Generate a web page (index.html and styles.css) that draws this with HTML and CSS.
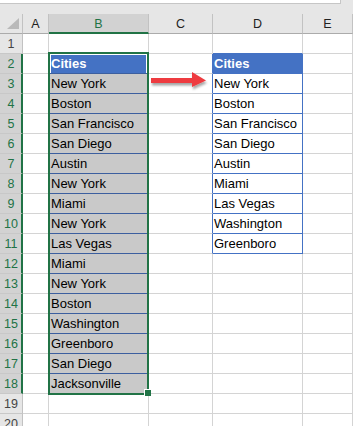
FILE: index.html
```html
<!DOCTYPE html>
<html>
<head>
<meta charset="utf-8">
<link rel="stylesheet" href="styles.css">
</head>
<body>
<div class="top"><div class="fbox"></div></div>
<div class="sheet">
  <div class="row hdr">
    <div class="corner"><svg width="22" height="19" viewBox="0 0 22 19"><polygon points="7,15 19,15 19,4" fill="#b9b9b9"/></svg></div>
    <div class="ch">A</div><div class="ch sel">B</div><div class="ch">C</div><div class="ch">D</div><div class="ch">E</div>
  </div>
  <div class="row"><div class="rh">1</div><div class="c"></div><div class="c"></div><div class="c"></div><div class="c above"></div><div class="c"></div></div>
  <div class="row"><div class="rh sel">2</div><div class="c"></div><div class="c bh active">Cities</div><div class="c tl"></div><div class="c t dh">Cities</div><div class="c"></div></div>
  <div class="row"><div class="rh sel">3</div><div class="c"></div><div class="c g">New York</div><div class="c tl"></div><div class="c t">New York</div><div class="c"></div></div>
  <div class="row"><div class="rh sel">4</div><div class="c"></div><div class="c g">Boston</div><div class="c tl"></div><div class="c t">Boston</div><div class="c"></div></div>
  <div class="row"><div class="rh sel">5</div><div class="c"></div><div class="c g">San Francisco</div><div class="c tl"></div><div class="c t">San Francisco</div><div class="c"></div></div>
  <div class="row"><div class="rh sel">6</div><div class="c"></div><div class="c g">San Diego</div><div class="c tl"></div><div class="c t">San Diego</div><div class="c"></div></div>
  <div class="row"><div class="rh sel">7</div><div class="c"></div><div class="c g">Austin</div><div class="c tl"></div><div class="c t">Austin</div><div class="c"></div></div>
  <div class="row"><div class="rh sel">8</div><div class="c"></div><div class="c g">New York</div><div class="c tl"></div><div class="c t">Miami</div><div class="c"></div></div>
  <div class="row"><div class="rh sel">9</div><div class="c"></div><div class="c g">Miami</div><div class="c tl"></div><div class="c t">Las Vegas</div><div class="c"></div></div>
  <div class="row"><div class="rh sel">10</div><div class="c"></div><div class="c g">New York</div><div class="c tl"></div><div class="c t">Washington</div><div class="c"></div></div>
  <div class="row"><div class="rh sel">11</div><div class="c"></div><div class="c g">Las Vegas</div><div class="c tl"></div><div class="c t">Greenboro</div><div class="c"></div></div>
  <div class="row"><div class="rh sel">12</div><div class="c"></div><div class="c g">Miami</div><div class="c"></div><div class="c"></div><div class="c"></div></div>
  <div class="row"><div class="rh sel">13</div><div class="c"></div><div class="c g">New York</div><div class="c"></div><div class="c"></div><div class="c"></div></div>
  <div class="row"><div class="rh sel">14</div><div class="c"></div><div class="c g">Boston</div><div class="c"></div><div class="c"></div><div class="c"></div></div>
  <div class="row"><div class="rh sel">15</div><div class="c"></div><div class="c g">Washington</div><div class="c"></div><div class="c"></div><div class="c"></div></div>
  <div class="row"><div class="rh sel">16</div><div class="c"></div><div class="c g">Greenboro</div><div class="c"></div><div class="c"></div><div class="c"></div></div>
  <div class="row"><div class="rh sel">17</div><div class="c"></div><div class="c g">San Diego</div><div class="c"></div><div class="c"></div><div class="c"></div></div>
  <div class="row"><div class="rh sel">18</div><div class="c"></div><div class="c g">Jacksonville</div><div class="c"></div><div class="c"></div><div class="c"></div></div>
  <div class="row"><div class="rh">19</div><div class="c"></div><div class="c"></div><div class="c"></div><div class="c"></div><div class="c"></div></div>
  <div class="row"><div class="rh">20</div><div class="c"></div><div class="c"></div><div class="c"></div><div class="c"></div><div class="c"></div></div>

  <div class="selbox"></div>
  <div class="handle"></div>
  <svg class="arrow" width="64" height="24" viewBox="0 0 64 24">
    <defs>
      <filter id="sh" x="-20%" y="-40%" width="140%" height="190%">
        <feDropShadow dx="1" dy="2.5" stdDeviation="1.2" flood-color="#000" flood-opacity="0.35"/>
      </filter>
    </defs>
    <path d="M3 8 H44 V2 L58 10.5 L44 17 V13 H3 Z" fill="#ee3a3f" filter="url(#sh)"/>
  </svg>
</div>
</body>
</html>
```

FILE: styles.css
```css
html, body {
  margin: 0;
  padding: 0;
  background: #ffffff;
  overflow: hidden;
}
body {
  width: 353px;
  height: 426px;
  font-family: "Liberation Sans", Arial, sans-serif;
}
.top {
  height: 14px;
  background: #e6e6e6;
  box-sizing: border-box;
}
.fbox {
  width: 341px;
  height: 4px;
  background: #ffffff;
  border-bottom: 1px solid #c6c6c6;
  border-right: 1px solid #c6c6c6;
  box-sizing: border-box;
}
.sheet {
  position: relative;
}
.row {
  display: grid;
  grid-template-columns: 23px 26px 100px 64px 90px 1fr;
  height: 20px;
}
.row > div {
  box-sizing: border-box;
  height: 20px;
  overflow: hidden;
  white-space: nowrap;
}
.hdr > div {
  background: #e6e6e6;
  border-right: 1px solid #c2c2c2;
  border-bottom: 1px solid #ababab;
  font-size: 12.5px;
  line-height: 20px;
  text-align: center;
  color: #222;
}
.corner svg {
  display: block;
}
.hdr > .sel {
  background: #d2d2d2;
  color: #217346;
  border-bottom: 2px solid #217346;
}
.rh {
  background: #e6e6e6;
  border-right: 1px solid #c2c2c2;
  border-bottom: 1px solid #c8c8c8;
  font-size: 12.5px;
  line-height: 20px;
  text-align: center;
  color: #444;
}
.rh.sel {
  background: #d2d2d2;
  color: #217346;
  border-right: 2px solid #217346;
  padding-left: 1px;
}
.c {
  border-right: 1px solid #d4d4d4;
  border-bottom: 1px solid #d4d4d4;
  font-size: 13px;
  line-height: 20px;
  padding-left: 2px;
  color: #000;
}
.c.above {
  border-bottom-color: #4472c4;
}
.c.tl {
  border-right-color: #4472c4;
}
.c.t {
  border-right-color: #4472c4;
  border-bottom-color: #4472c4;
  padding-left: 1px;
}
.c.dh {
  background: #4472c4;
  color: #ffffff;
  font-weight: bold;
}
.c.bh {
  background: #4472c4;
  color: #ffffff;
  font-weight: bold;
  border-bottom-color: #3c5f9f;
  padding-left: 2px;
}
.c.active {
  box-shadow: inset 2px 1px 0 #ffffff, inset -2px 0 0 #ffffff;
}
.c.g {
  background: #c9c9c9;
  border-bottom-color: #3c5f9f;
}
.selbox {
  position: absolute;
  left: 48px;
  top: 38px;
  width: 101px;
  height: 343px;
  border: 2px solid #217346;
  box-sizing: border-box;
}
.handle {
  position: absolute;
  left: 144px;
  top: 375px;
  width: 6px;
  height: 6px;
  background: #217346;
  border-left: 1px solid #ffffff;
  border-top: 1px solid #ffffff;
}
.arrow {
  position: absolute;
  left: 148px;
  top: 56px;
}
```
